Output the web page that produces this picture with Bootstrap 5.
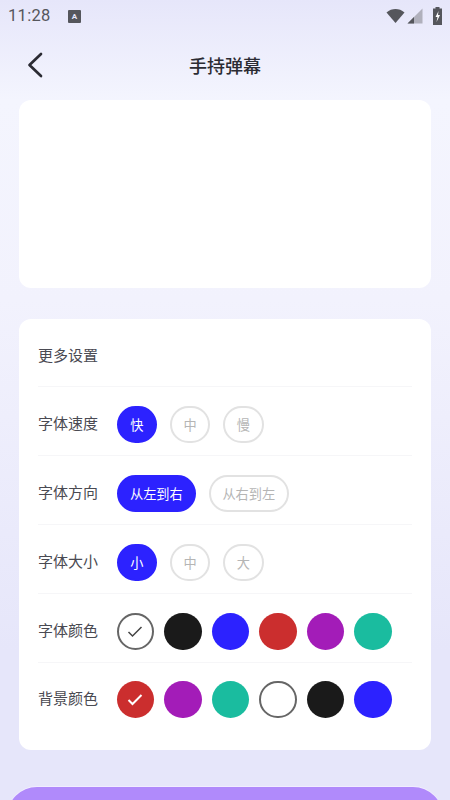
<!doctype html>
<html lang="zh"><head><meta charset="utf-8">
<link href="https://cdn.jsdelivr.net/npm/bootstrap@5.3.0/dist/css/bootstrap.min.css" rel="stylesheet">
<style>
html,body{height:800px;overflow:hidden}
body{font-family:"Noto Sans CJK SC","Roboto",sans-serif;background:linear-gradient(180deg,#e6e6fa 0,#f4f5fe 100px,#f2f2fd 300px,#e6e6fa 650px);color:#4a4a52}
.stbar{height:32px;padding:0 7px 0 8px;color:#55565c}
.sttime{font-family:Roboto,sans-serif;font-size:16.500px;letter-spacing:.3px;line-height:32px}
.stime-a{width:12.500px;height:13px;border-radius:1px;background:#55565c;color:#e6e6fa;font:700 8px/13px Roboto,sans-serif;text-align:center;margin-left:17.500px}
.stic-sig{margin-left:1px}
.stic-bat{margin-left:9px}
.hdr{height:68px;padding-bottom:2px}
.hdr-title{font-size:18px;font-weight:500;color:#2b2b33;line-height:24px}
.hdr-back{left:25.500px;top:20px}
.panel{background:#fff;border-radius:12px;margin:0 19px}
.panel-a{height:188px}
.panel-b{margin-top:31px;height:431px;padding:6px 19px 0}
.setrow{height:69px;padding-top:7px;border-bottom:1px solid #f6f6f8}
.setrow:nth-child(1){height:62px;padding-top:2px}
.setrow:last-child{border-bottom:0;height:66px}
.setlabel{font-size:15px;width:78.500px;flex:none;color:#4a4a52;margin-bottom:2px}
.opt{height:37.500px;min-width:40.600px;border-radius:19px;border:2px solid #e2e2e2;color:#b5b5b5;font-size:13.200px;padding:0 11.500px;background:#fff}
.opt.sel{background:#2c22ff;border-color:#2c22ff;color:#fff}
.opt-g{gap:12.700px}
.swatches{gap:10px}
.sw{width:37.500px;height:37.500px;border-radius:50%;flex:none}
.sw-w{background:#fff;border:2px solid #666}
.sw-k{background:#1a1a1a}.sw-b{background:#2c22ff}.sw-r{background:#cb2e2e}.sw-p{background:#a31cb8}.sw-g{background:#1abc9f}
.cta{height:60px;margin:37px 7px 0;border-radius:30px 30px 0 0;background:#b08afb;box-shadow:0 -1px 0 #f1edff}
</style></head>
<body>
<div class="stbar d-flex align-items-center">
  <span class="sttime">11:28</span><span class="stime-a">A</span>
  <div class="d-flex align-items-center ms-auto">
    <svg width="20" height="16" viewBox="0 0 20 16"><path d="M.5 4.500C3 2 6.500 1 9.500 1s6.500 1 9 3.500L9.500 15z" fill="#55565c"/></svg>
    <svg class="stic-sig" width="16" height="16" viewBox="0 0 16 16"><path d="M15.500 0.500V15.500H.5z" fill="#b0b0bc"/><path d="M7 9V15.500H.5z" fill="#55565c"/></svg>
    <svg class="stic-bat" width="11" height="18" viewBox="0 0 11 18"><path d="M3.500 0h4v1.500H10V18H1V1.500h2.500z" fill="#55565c"/><path d="M6.500 4L3.500 10h2L4.500 15 8 8H6z" fill="#fff"/></svg>
  </div>
</div>
<div class="hdr position-relative d-flex align-items-center justify-content-center">
  <svg class="hdr-back position-absolute" width="18" height="26" viewBox="0 0 18 26"><path d="M15 2 3.500 13 15 24" fill="none" stroke="#2b2b33" stroke-width="2.700" stroke-linecap="round" stroke-linejoin="round"/></svg>
  <div class="hdr-title">手持弹幕</div>
</div>
<div class="panel panel-a"></div>
<div class="panel panel-b">
  <div class="setrow d-flex align-items-center"><span class="setlabel">更多设置</span></div>
  <div class="setrow d-flex align-items-center"><span class="setlabel">字体速度</span>
    <div class="d-flex opt-g"><span class="opt sel d-flex align-items-center justify-content-center">快</span><span class="opt d-flex align-items-center justify-content-center">中</span><span class="opt d-flex align-items-center justify-content-center">慢</span></div></div>
  <div class="setrow d-flex align-items-center"><span class="setlabel">字体方向</span>
    <div class="d-flex opt-g"><span class="opt sel d-flex align-items-center justify-content-center">从左到右</span><span class="opt d-flex align-items-center justify-content-center">从右到左</span></div></div>
  <div class="setrow d-flex align-items-center"><span class="setlabel">字体大小</span>
    <div class="d-flex opt-g"><span class="opt sel d-flex align-items-center justify-content-center">小</span><span class="opt d-flex align-items-center justify-content-center">中</span><span class="opt d-flex align-items-center justify-content-center">大</span></div></div>
  <div class="setrow d-flex align-items-center"><span class="setlabel">字体颜色</span>
    <div class="d-flex swatches">
      <span class="sw sw-w d-flex align-items-center justify-content-center"><svg width="16" height="13" viewBox="0 0 16 13"><path d="M1.500 7 5.500 11 14.500 2" fill="none" stroke="#444" stroke-width="1.500"/></svg></span>
      <span class="sw sw-k"></span><span class="sw sw-b"></span><span class="sw sw-r"></span><span class="sw sw-p"></span><span class="sw sw-g"></span></div></div>
  <div class="setrow d-flex align-items-center"><span class="setlabel">背景颜色</span>
    <div class="d-flex swatches">
      <span class="sw sw-r d-flex align-items-center justify-content-center"><svg width="16" height="13" viewBox="0 0 16 13"><path d="M1.500 7 5.500 11 14.500 2" fill="none" stroke="#fff" stroke-width="2"/></svg></span>
      <span class="sw sw-p"></span><span class="sw sw-g"></span><span class="sw sw-w"></span><span class="sw sw-k"></span><span class="sw sw-b"></span></div></div>
</div>
<div class="cta"></div>
<script src="https://cdn.jsdelivr.net/npm/bootstrap@5.3.0/dist/js/bootstrap.bundle.min.js"></script>
</body></html>
